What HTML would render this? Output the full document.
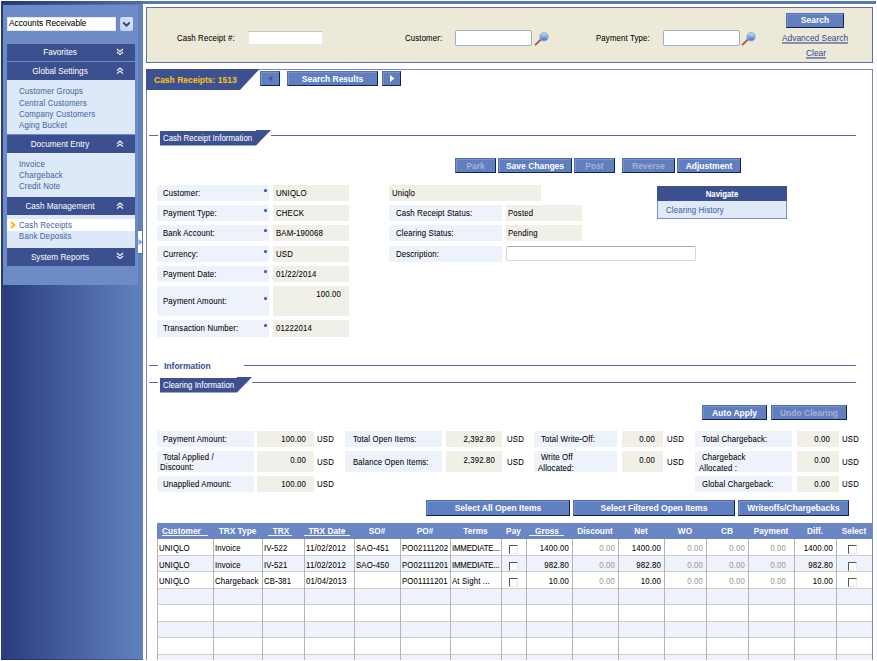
<!DOCTYPE html>
<html><head><meta charset="utf-8">
<style>
*{margin:0;padding:0;box-sizing:border-box}
html,body{width:877px;height:661px;overflow:hidden;background:#fff;font-family:"Liberation Sans",sans-serif;font-size:7.8px;color:#000}
.a{position:absolute}
.t{position:absolute;white-space:nowrap;line-height:12px;transform:scaleY(1.2);-webkit-text-stroke:0.05px currentColor;letter-spacing:0.15px}
/* sidebar */
#sb{left:1px;top:1px;width:142px;height:659px;background:linear-gradient(to right,#2a3b7b 0%,#46609e 50%,#6282bf 100%)}
#sbi{left:3px;top:5px;width:135px;height:280px;background:#6d8bc5}
.hd{position:absolute;left:7px;width:128px;height:17px;background:#3c4f8f;color:#fff;font-size:8.2px}
.hd span{position:absolute;left:0;width:106px;text-align:center;top:3px;line-height:12px}
.hd i{position:absolute;left:115px;top:3px;width:10px;height:11px}
.ct{position:absolute;left:7px;width:128px;background:#dde8f8}
.lk{position:absolute;left:12px;color:#4a68a6;line-height:11px;white-space:nowrap;font-size:7.85px;margin-top:0;transform:scaleY(1.2);-webkit-text-stroke:0.05px currentColor;letter-spacing:0.15px}
/* buttons */
.btn{position:absolute;height:16px;background:#5f7fc1;border:1px solid;border-color:#5170b0 #142250 #142250 #5170b0;box-shadow:inset 1px 1px 0 #7893cc;color:#fff;font-weight:bold;text-align:center;line-height:15px;font-size:8.5px;white-space:nowrap}
.btn.dis{color:#a6b1cf}
.inp{position:absolute;height:16px;background:#fff;border:1px solid #9db0c8;border-radius:2px}
.lab{position:absolute;background:#eef2fa}
.val{position:absolute;background:#f0efe8}
.ast{position:absolute;width:3px;height:3px;border-radius:50%;background:#4a68b4;font-size:0;line-height:0;margin-left:1.5px;margin-top:1px;box-shadow:0 0 0.6px #4a68b4}
.line{position:absolute;height:1px;background:#5a6aa8}
/* table */
#tbl{left:157px;top:523px;width:715px}
.th{position:absolute;top:523px;height:16px;background:#6a86c4;color:#fff;font-weight:bold;font-size:8.3px;line-height:16px;text-align:center;white-space:nowrap}
.th u{text-decoration:underline}
.rw{position:absolute;left:157px;width:715px;height:16px}
.vl{position:absolute;top:539px;width:1px;height:122px;background:#b4b4b4}
.hl{position:absolute;left:157px;width:715px;height:1px;background:#cfcfcf}
.c{position:absolute;white-space:nowrap;line-height:16px;transform:scaleY(1.2);-webkit-text-stroke:0.05px currentColor;letter-spacing:0.15px}
.r{text-align:right}
.g{color:#9a9a9a}
.cb{position:absolute;width:9px;height:9px;border:1px solid;border-color:#555 #e8e8e8 #e8e8e8 #555;background:#fff}
</style></head>
<body>
<!-- sidebar -->
<div id="sb" class="a"></div>
<div id="sbi" class="a"></div>
<div class="a" style="left:1px;top:1px;width:142px;height:3px;background:linear-gradient(to right,#22357a,#4e6cae)"></div>
<div class="a" style="left:7px;top:17px;width:109px;height:14px;background:#fff;border:1px solid #e0e6f2"></div>
<div class="t" style="left:9px;top:17px;color:#000;font-size:8.3px;transform:scaleY(1.05);letter-spacing:0">Accounts Receivable</div>
<div class="a" style="left:120px;top:17px;width:13px;height:14px;background:linear-gradient(45deg,#bccff6,#d8e4fb);border-radius:2px"></div>
<svg class="a" style="left:122px;top:21px" width="9" height="7" viewBox="0 0 9 7"><path d="M1.3 1.5 L4.5 4.7 L7.7 1.5" fill="none" stroke="#3b4868" stroke-width="1.9"/></svg>

<div class="hd" style="top:44px"><span>Favorites</span><svg class="a" style="left:109px;top:4px" width="8" height="8" viewBox="0 0 8 8"><path d="M1 1 L4 3.6 L7 1 M1 4 L4 6.6 L7 4" fill="none" stroke="#fff" stroke-width="1.15"/></svg></div>
<div class="hd" style="top:62px;height:18px"><span style="top:4px">Global Settings</span><svg class="a" style="left:109px;top:5px" width="8" height="8" viewBox="0 0 8 8"><path d="M1 3.6 L4 1 L7 3.6 M1 6.6 L4 4 L7 6.6" fill="none" stroke="#fff" stroke-width="1.15"/></svg></div>
<div class="ct" style="top:80px;height:54px">
<div class="lk" style="top:5px">Customer Groups</div>
<div class="lk" style="top:17px">Central Customers</div>
<div class="lk" style="top:28px">Company Customers</div>
<div class="lk" style="top:39px">Aging Bucket</div>
</div>
<div class="hd" style="top:135px;height:18px"><span style="top:4px">Document Entry</span><svg class="a" style="left:109px;top:5px" width="8" height="8" viewBox="0 0 8 8"><path d="M1 3.6 L4 1 L7 3.6 M1 6.6 L4 4 L7 6.6" fill="none" stroke="#fff" stroke-width="1.15"/></svg></div>
<div class="ct" style="top:153px;height:44px">
<div class="lk" style="top:6px">Invoice</div>
<div class="lk" style="top:17px">Chargeback</div>
<div class="lk" style="top:28px">Credit Note</div>
</div>
<div class="hd" style="top:197px;height:18px"><span style="top:4px">Cash Management</span><svg class="a" style="left:109px;top:5px" width="8" height="8" viewBox="0 0 8 8"><path d="M1 3.6 L4 1 L7 3.6 M1 6.6 L4 4 L7 6.6" fill="none" stroke="#fff" stroke-width="1.15"/></svg></div>
<div class="ct" style="top:215px;height:33px">
<div class="a" style="left:0;top:4px;width:128px;height:12px;background:#fff"></div>
<svg class="a" style="left:3px;top:6px" width="6" height="8" viewBox="0 0 6 8"><path d="M1 1 L4.5 4 L1 7" fill="none" stroke="#f7bb00" stroke-width="1.9"/></svg>
<div class="lk" style="top:5px">Cash Receipts</div>
<div class="lk" style="top:16px">Bank Deposits</div>
</div>
<div class="hd" style="top:248px;height:18px"><span style="top:4px">System Reports</span><svg class="a" style="left:109px;top:4px" width="8" height="8" viewBox="0 0 8 8"><path d="M1 1 L4 3.6 L7 1 M1 4 L4 6.6 L7 4" fill="none" stroke="#fff" stroke-width="1.15"/></svg></div>
<!-- collapse handle -->
<div class="a" style="left:138px;top:230px;width:5px;height:24px;background:#fff;border:1px solid #5776b6;border-left:none"></div>
<svg class="a" style="left:138px;top:238px" width="5" height="8" viewBox="0 0 5 8"><path d="M0.5 1 L4.5 4 L0.5 7Z" fill="#7f9bd0"/></svg>

<!-- top band -->
<div class="a" style="left:143px;top:1px;width:733px;height:3px;background:#5878b8"></div>

<!-- search panel -->
<div class="a" style="left:146px;top:7px;width:727px;height:56px;background:#ece9d8;border:1px solid #5f6f9f"></div>
<div class="t" style="left:177px;top:33px">Cash Receipt #:</div>
<div class="a" style="left:248px;top:31px;width:75px;height:14px;background:#fff;border:1px solid #e6e8ee;border-top-color:#c2c6d0"></div>
<div class="t" style="left:405px;top:33px">Customer:</div>
<div class="inp" style="left:455px;top:30px;width:77px"></div>
<svg class="a" style="left:534px;top:32px" width="15" height="14" viewBox="0 0 15 14"><defs><linearGradient id="mg1" x1="0" y1="0" x2="0" y2="1"><stop offset="0" stop-color="#d4e2fa"/><stop offset="1" stop-color="#2c70d8"/></linearGradient></defs><path d="M1.6 12.6 L6.6 7.8" stroke="#a8604f" stroke-width="2" stroke-linecap="round"/><circle cx="10" cy="4.8" r="4.1" fill="url(#mg1)" stroke="#9ba3b5" stroke-width="1"/></svg>
<div class="t" style="left:596px;top:33px">Payment Type:</div>
<div class="inp" style="left:663px;top:30px;width:77px"></div>
<svg class="a" style="left:741px;top:32px" width="15" height="14" viewBox="0 0 15 14"><defs><linearGradient id="mg2" x1="0" y1="0" x2="0" y2="1"><stop offset="0" stop-color="#d4e2fa"/><stop offset="1" stop-color="#2c70d8"/></linearGradient></defs><path d="M1.6 12.6 L6.6 7.8" stroke="#a8604f" stroke-width="2" stroke-linecap="round"/><circle cx="10" cy="4.8" r="4.1" fill="url(#mg2)" stroke="#9ba3b5" stroke-width="1"/></svg>
<div class="btn" style="left:786px;top:13px;width:58px;height:15px;line-height:13px">Search</div>
<div class="t" style="left:782px;top:32px;color:#34448a;text-decoration:underline;font-size:8.4px;transform:scaleY(1.1);-webkit-text-stroke:0;letter-spacing:0">Advanced Search</div>
<div class="t" style="left:806px;top:47px;color:#34448a;text-decoration:underline;font-size:8.4px;transform:scaleY(1.1);-webkit-text-stroke:0;letter-spacing:0">Clear</div>

<!-- results panel -->
<div class="a" style="left:146px;top:69px;width:727px;height:600px;border:1px solid #7a86bc"></div>
<svg class="a" style="left:146px;top:69px" width="114" height="21" viewBox="0 0 114 21"><path d="M0 0 H113.5 L94 21 H0Z" fill="#3d5191"/></svg>
<div class="t" style="left:154px;top:74px;color:#f5c21a;font-weight:bold;font-size:8.5px;transform:scaleY(1.08);letter-spacing:0">Cash Receipts: 1513</div>
<div class="btn" style="left:260px;top:71px;width:20px;height:15px"></div>
<svg class="a" style="left:268px;top:75px" width="5" height="7" viewBox="0 0 5 7"><path d="M4.2 0.6 L0.2 3.6 L4.2 6.6Z" fill="#4a5a8c"/></svg>
<div class="btn" style="left:287px;top:71px;width:91px;height:15px;line-height:15px">Search Results</div>
<div class="btn" style="left:382px;top:71px;width:19px;height:15px"></div>
<svg class="a" style="left:390px;top:75px" width="5" height="7" viewBox="0 0 5 7"><path d="M0 0 L4.6 3.5 L0 7Z" fill="#fff"/></svg>

<!-- Cash Receipt Information section -->
<div class="line" style="left:149px;top:135px;width:9px"></div>
<svg class="a" style="left:160px;top:130px" width="111" height="16" viewBox="0 0 111 16"><path d="M0 1 H96 V0 H111 L96 15.5 H0Z" fill="#3d5191"/></svg>
<div class="t" style="left:163px;top:133px;color:#fff;transform:scaleY(1.08);letter-spacing:0.05px">Cash Receipt Information</div>
<div class="line" style="left:271px;top:135px;width:585px"></div>

<div class="btn dis" style="left:455px;top:158px;width:41px;height:15px;line-height:15px">Park</div>
<div class="btn" style="left:498px;top:158px;width:74px;height:15px;line-height:15px">Save Changes</div>
<div class="btn dis" style="left:574px;top:158px;width:41px;height:15px;line-height:15px">Post</div>
<div class="btn dis" style="left:622px;top:158px;width:53px;height:15px;line-height:15px">Reverse</div>
<div class="btn" style="left:677px;top:158px;width:64px;height:15px;line-height:15px">Adjustment</div>

<!-- form left column -->
<div class="lab" style="left:157px;top:185px;width:112px;height:16px"></div><div class="t" style="left:163px;top:188px">Customer:</div><div class="ast" style="left:262px;top:188px">*</div><div class="val" style="left:273px;top:185px;width:76px;height:16px"></div><div class="t" style="left:276px;top:188px">UNIQLO</div>
<div class="lab" style="left:157px;top:205px;width:112px;height:16px"></div><div class="t" style="left:163px;top:208px">Payment Type:</div><div class="ast" style="left:262px;top:208px">*</div><div class="val" style="left:273px;top:205px;width:76px;height:16px"></div><div class="t" style="left:276px;top:208px">CHECK</div>
<div class="lab" style="left:157px;top:225px;width:112px;height:16px"></div><div class="t" style="left:163px;top:228px">Bank Account:</div><div class="ast" style="left:262px;top:228px">*</div><div class="val" style="left:273px;top:225px;width:76px;height:16px"></div><div class="t" style="left:276px;top:228px">BAM-190068</div>
<div class="lab" style="left:157px;top:246px;width:112px;height:16px"></div><div class="t" style="left:163px;top:249px">Currency:</div><div class="ast" style="left:262px;top:249px">*</div><div class="val" style="left:273px;top:246px;width:76px;height:16px"></div><div class="t" style="left:276px;top:249px">USD</div>
<div class="lab" style="left:157px;top:266px;width:112px;height:16px"></div><div class="t" style="left:163px;top:269px">Payment Date:</div><div class="ast" style="left:262px;top:269px">*</div><div class="val" style="left:273px;top:266px;width:76px;height:16px"></div><div class="t" style="left:276px;top:269px">01/22/2014</div>
<div class="lab" style="left:157px;top:286px;width:112px;height:30px"></div><div class="t" style="left:163px;top:296px">Payment Amount:</div><div class="ast" style="left:262px;top:296px">*</div><div class="val" style="left:273px;top:286px;width:76px;height:30px"></div><div class="t r" style="left:273px;width:68px;top:289px">100.00</div>
<div class="lab" style="left:157px;top:320px;width:112px;height:17px"></div><div class="t" style="left:163px;top:323px">Transaction Number:</div><div class="ast" style="left:262px;top:323px">*</div><div class="val" style="left:273px;top:320px;width:76px;height:17px"></div><div class="t" style="left:276px;top:323px">01222014</div>

<!-- form middle column -->
<div class="val" style="left:389px;top:185px;width:152px;height:16px"></div><div class="t" style="left:392px;top:188px">Uniqlo</div>
<div class="lab" style="left:389px;top:205px;width:113px;height:16px"></div><div class="t" style="left:396px;top:208px">Cash Receipt Status:</div><div class="val" style="left:506px;top:205px;width:76px;height:16px"></div><div class="t" style="left:508px;top:208px">Posted</div>
<div class="lab" style="left:389px;top:225px;width:113px;height:16px"></div><div class="t" style="left:396px;top:228px">Clearing Status:</div><div class="val" style="left:506px;top:225px;width:76px;height:16px"></div><div class="t" style="left:508px;top:228px">Pending</div>
<div class="lab" style="left:389px;top:246px;width:113px;height:16px"></div><div class="t" style="left:396px;top:249px">Description:</div><div class="a" style="left:506px;top:246px;width:190px;height:15px;background:#fff;border:1px solid #d4d8e0;border-top-color:#a6a9b6;border-radius:2px"></div>

<!-- navigate -->
<div class="a" style="left:657px;top:186px;width:130px;height:33px;background:#dfe9f8;border:1px solid #7b90c6"></div>
<div class="a" style="left:657px;top:186px;width:130px;height:15px;background:#3c4f8f"></div>
<div class="t" style="left:657px;width:130px;text-align:center;top:189px;color:#fff;font-weight:bold;letter-spacing:0">Navigate</div>
<div class="t" style="left:666px;top:205px;color:#3f5fa0">Clearing History</div>

<!-- Information section -->
<div class="line" style="left:149px;top:365px;width:9px"></div>
<div class="t" style="left:164px;top:360px;color:#3d5191;font-weight:bold;font-size:8.5px;transform:none;letter-spacing:0">Information</div>
<div class="line" style="left:244px;top:365px;width:612px"></div>
<div class="line" style="left:149px;top:382px;width:9px"></div>
<svg class="a" style="left:160px;top:377px" width="93" height="16" viewBox="0 0 93 16"><path d="M0 1 H77 V0 H92 L77 15.5 H0Z" fill="#3d5191"/></svg>
<div class="t" style="left:163px;top:380px;color:#fff;transform:scaleY(1.08);letter-spacing:0.05px">Clearing Information</div>
<div class="line" style="left:252px;top:382px;width:604px"></div>

<div class="btn" style="left:702px;top:405px;width:65px;height:15px;line-height:15px">Auto Apply</div>
<div class="btn dis" style="left:771px;top:405px;width:76px;height:15px;line-height:15px">Undo Clearing</div>

<!-- clearing summary -->
<div class="lab" style="left:157px;top:431px;width:97px;height:16px"></div><div class="t" style="left:163px;top:434px">Payment Amount:</div><div class="val" style="left:257px;top:431px;width:57px;height:16px"></div><div class="t r" style="left:257px;width:49px;top:434px">100.00</div><div class="t" style="left:317px;top:434px">USD</div>
<div class="lab" style="left:157px;top:451px;width:97px;height:21px"></div><div class="t" style="left:163px;top:453px;line-height:10px">Total Applied /</div><div class="t" style="left:160px;top:463px;line-height:10px">Discount:</div><div class="val" style="left:257px;top:451px;width:57px;height:21px"></div><div class="t r" style="left:257px;width:49px;top:455px">0.00</div><div class="t" style="left:317px;top:457px">USD</div>
<div class="lab" style="left:157px;top:476px;width:97px;height:16px"></div><div class="t" style="left:163px;top:479px">Unapplied Amount:</div><div class="val" style="left:257px;top:476px;width:57px;height:16px"></div><div class="t r" style="left:257px;width:49px;top:479px">100.00</div><div class="t" style="left:317px;top:479px">USD</div>

<div class="lab" style="left:345px;top:431px;width:97px;height:16px"></div><div class="t" style="left:353px;top:434px">Total Open Items:</div><div class="val" style="left:446px;top:431px;width:56px;height:16px"></div><div class="t r" style="left:446px;width:49px;top:434px">2,392.80</div><div class="t" style="left:507px;top:434px">USD</div>
<div class="lab" style="left:345px;top:451px;width:97px;height:21px"></div><div class="t" style="left:353px;top:457px">Balance Open Items:</div><div class="val" style="left:446px;top:451px;width:56px;height:21px"></div><div class="t r" style="left:446px;width:49px;top:455px">2,392.80</div><div class="t" style="left:507px;top:457px">USD</div>

<div class="lab" style="left:534px;top:431px;width:83px;height:16px"></div><div class="t" style="left:541px;top:434px">Total Write-Off:</div><div class="val" style="left:622px;top:431px;width:41px;height:16px"></div><div class="t r" style="left:622px;width:33px;top:434px">0.00</div><div class="t" style="left:667px;top:434px">USD</div>
<div class="lab" style="left:534px;top:451px;width:83px;height:21px"></div><div class="t" style="left:541px;top:453px;line-height:10px">Write Off</div><div class="t" style="left:538px;top:464px;line-height:10px">Allocated:</div><div class="val" style="left:622px;top:451px;width:41px;height:21px"></div><div class="t r" style="left:622px;width:33px;top:455px">0.00</div><div class="t" style="left:667px;top:457px">USD</div>

<div class="lab" style="left:695px;top:431px;width:97px;height:16px"></div><div class="t" style="left:702px;top:434px">Total Chargeback:</div><div class="val" style="left:797px;top:431px;width:42px;height:16px"></div><div class="t r" style="left:797px;width:33px;top:434px">0.00</div><div class="t" style="left:842px;top:434px">USD</div>
<div class="lab" style="left:695px;top:451px;width:97px;height:21px"></div><div class="t" style="left:702px;top:453px;line-height:10px">Chargeback</div><div class="t" style="left:699px;top:464px;line-height:10px">Allocated :</div><div class="val" style="left:797px;top:451px;width:42px;height:21px"></div><div class="t r" style="left:797px;width:33px;top:455px">0.00</div><div class="t" style="left:842px;top:457px">USD</div>
<div class="lab" style="left:695px;top:476px;width:97px;height:16px"></div><div class="t" style="left:702px;top:479px">Global Chargeback:</div><div class="val" style="left:797px;top:476px;width:42px;height:16px"></div><div class="t r" style="left:797px;width:33px;top:479px">0.00</div><div class="t" style="left:842px;top:479px">USD</div>

<div class="btn" style="left:426px;top:500px;width:144px;height:16px">Select All Open Items</div>
<div class="btn" style="left:573px;top:500px;width:162px;height:16px">Select Filtered Open Items</div>
<div class="btn" style="left:738px;top:500px;width:111px;height:16px">Writeoffs/Chargebacks</div>

<!-- table -->
<div class="a" style="left:157px;top:523px;width:715px;height:16px;background:#6a86c4"></div>
<!--ROWS-->
<div class="a" style="left:157px;top:539px;width:715px;height:16px;background:#ffffff"></div>
<div class="a" style="left:157px;top:556px;width:715px;height:15px;background:#eef2fa"></div>
<div class="a" style="left:157px;top:572px;width:715px;height:16px;background:#ffffff"></div>
<div class="a" style="left:157px;top:589px;width:715px;height:15px;background:#eef2fa"></div>
<div class="a" style="left:157px;top:605px;width:715px;height:16px;background:#ffffff"></div>
<div class="a" style="left:157px;top:622px;width:715px;height:15px;background:#eef2fa"></div>
<div class="a" style="left:157px;top:638px;width:715px;height:16px;background:#ffffff"></div>
<div class="a" style="left:157px;top:655px;width:715px;height:6px;background:#eef2fa"></div>
<div class="hl" style="top:555px"></div>
<div class="hl" style="top:571px"></div>
<div class="hl" style="top:588px"></div>
<div class="hl" style="top:604px"></div>
<div class="hl" style="top:621px"></div>
<div class="hl" style="top:637px"></div>
<div class="hl" style="top:654px"></div>
<div class="vl" style="left:157px"></div>
<div class="vl" style="left:213px"></div>
<div class="vl" style="left:262px"></div>
<div class="vl" style="left:304px"></div>
<div class="vl" style="left:354px"></div>
<div class="vl" style="left:400px"></div>
<div class="vl" style="left:450px"></div>
<div class="vl" style="left:501px"></div>
<div class="vl" style="left:526px"></div>
<div class="vl" style="left:572px"></div>
<div class="vl" style="left:618px"></div>
<div class="vl" style="left:664px"></div>
<div class="vl" style="left:706px"></div>
<div class="vl" style="left:748px"></div>
<div class="vl" style="left:794px"></div>
<div class="vl" style="left:836px"></div>
<div class="th" style="left:162px;width:50px;text-align:left">Customer</div>
<div class="th" style="left:213px;width:49px">TRX Type</div>
<div class="th" style="left:260px;width:42px">TRX</div>
<div class="th" style="left:302px;width:50px">TRX Date</div>
<div class="th" style="left:354px;width:46px">SO#</div>
<div class="th" style="left:400px;width:50px">PO#</div>
<div class="th" style="left:450px;width:51px">Terms</div>
<div class="th" style="left:501px;width:25px">Pay</div>
<div class="th" style="left:524px;width:46px">Gross</div>
<div class="th" style="left:572px;width:46px">Discount</div>
<div class="th" style="left:618px;width:46px">Net</div>
<div class="th" style="left:664px;width:42px">WO</div>
<div class="th" style="left:706px;width:42px">CB</div>
<div class="th" style="left:748px;width:46px">Payment</div>
<div class="th" style="left:794px;width:42px">Diff.</div>
<div class="th" style="left:836px;width:36px">Select</div>
<div class="a" style="left:162px;top:535px;width:46px;height:1px;background:#f0f3fb"></div>
<div class="a" style="left:268px;top:535px;width:24px;height:1px;background:#f0f3fb"></div>
<div class="a" style="left:304px;top:535px;width:46px;height:1px;background:#f0f3fb"></div>
<div class="a" style="left:529px;top:535px;width:35px;height:1px;background:#f0f3fb"></div>
<div class="c" style="left:159px;top:541px">UNIQLO</div>
<div class="c" style="left:215px;top:541px">Invoice</div>
<div class="c" style="left:264px;top:541px">IV-522</div>
<div class="c" style="left:306px;top:541px">11/02/2012</div>
<div class="c" style="left:356px;top:541px">SAO-451</div>
<div class="c" style="left:402px;top:541px">PO02111202</div>
<div class="c" style="left:452px;top:541px;letter-spacing:-0.15px">IMMEDIATE...</div>
<div class="cb" style="left:509px;top:545px"></div>
<div class="c r" style="left:526px;width:43px;top:541px">1400.00</div>
<div class="c g r" style="left:572px;width:43px;top:541px">0.00</div>
<div class="c r" style="left:618px;width:43px;top:541px">1400.00</div>
<div class="c g r" style="left:664px;width:39px;top:541px">0.00</div>
<div class="c g r" style="left:706px;width:39px;top:541px">0.00</div>
<div class="c g r" style="left:748px;width:38px;top:541px">0.00</div>
<div class="c r" style="left:794px;width:39px;top:541px">1400.00</div>
<div class="cb" style="left:848px;top:545px"></div>
<div class="c" style="left:159px;top:558px">UNIQLO</div>
<div class="c" style="left:215px;top:558px">Invoice</div>
<div class="c" style="left:264px;top:558px">IV-521</div>
<div class="c" style="left:306px;top:558px">11/02/2012</div>
<div class="c" style="left:356px;top:558px">SAO-450</div>
<div class="c" style="left:402px;top:558px">PO02111201</div>
<div class="c" style="left:452px;top:558px;letter-spacing:-0.15px">IMMEDIATE...</div>
<div class="cb" style="left:509px;top:562px"></div>
<div class="c r" style="left:526px;width:43px;top:558px">982.80</div>
<div class="c g r" style="left:572px;width:43px;top:558px">0.00</div>
<div class="c r" style="left:618px;width:43px;top:558px">982.80</div>
<div class="c g r" style="left:664px;width:39px;top:558px">0.00</div>
<div class="c g r" style="left:706px;width:39px;top:558px">0.00</div>
<div class="c g r" style="left:748px;width:38px;top:558px">0.00</div>
<div class="c r" style="left:794px;width:39px;top:558px">982.80</div>
<div class="cb" style="left:848px;top:562px"></div>
<div class="c" style="left:159px;top:574px">UNIQLO</div>
<div class="c" style="left:215px;top:574px">Chargeback</div>
<div class="c" style="left:264px;top:574px">CB-381</div>
<div class="c" style="left:306px;top:574px">01/04/2013</div>
<div class="c" style="left:402px;top:574px">PO01111201</div>
<div class="c" style="left:452px;top:574px">At Sight ...</div>
<div class="cb" style="left:509px;top:578px"></div>
<div class="c r" style="left:526px;width:43px;top:574px">10.00</div>
<div class="c g r" style="left:572px;width:43px;top:574px">0.00</div>
<div class="c r" style="left:618px;width:43px;top:574px">10.00</div>
<div class="c g r" style="left:664px;width:39px;top:574px">0.00</div>
<div class="c g r" style="left:706px;width:39px;top:574px">0.00</div>
<div class="c g r" style="left:748px;width:38px;top:574px">0.00</div>
<div class="c r" style="left:794px;width:39px;top:574px">10.00</div>
<div class="cb" style="left:848px;top:578px"></div>
<!--/ROWS-->
<div class="a" style="left:1px;top:659px;width:142px;height:1px;background:linear-gradient(to right,#1c2c72,#4a64a8)"></div>
<div class="a" style="left:0;top:660px;width:877px;height:1px;background:#fff"></div>
</body></html>
